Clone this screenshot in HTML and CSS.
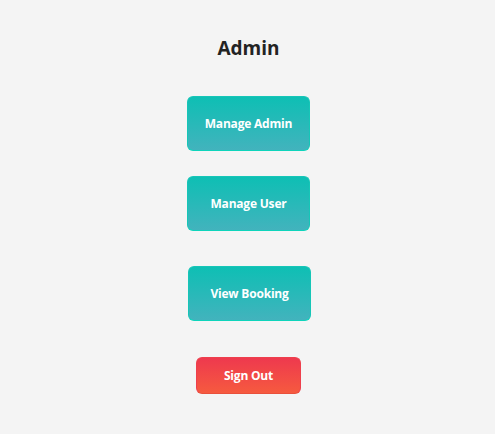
FILE: index.html
```html
<!DOCTYPE html>
<html>
<head>
<meta charset="utf-8">
<link rel="stylesheet" href="styles.css">
</head>
<body>
<main class="panel">
  <h1 class="title">Admin</h1>
  <button class="btn btn-teal btn-first">Manage Admin</button>
  <button class="btn btn-teal btn-second">Manage User</button>
  <button class="btn btn-teal btn-third">View Booking</button>
  <button class="btn btn-red">Sign Out</button>
</main>
</body>
</html>
```
FILE: styles.css
```css
html, body {
  margin: 0;
  padding: 0;
  background: #f4f4f4;
}
body {
  font-family: "Open Sans", "Noto Sans", sans-serif;
  width: 495px;
  height: 434px;
  overflow: hidden;
}
.panel {
  display: flex;
  flex-direction: column;
  align-items: center;
  padding-left: 2px;
}
.title {
  margin: 36px 0 0 0;
  font-size: 19px;
  line-height: 24px;
  font-weight: 700;
  color: #232323;
}
.btn {
  font-family: inherit;
  font-weight: 700;
  font-size: 12px;
  letter-spacing: -0.2px;
  color: #ffffff;
  border-radius: 6px;
  cursor: pointer;
  padding: 0;
}
.btn-teal {
  width: 123px;
  height: 55px;
  background: linear-gradient(to bottom, #0ebfb4, #42b3bd);
  border: 1px solid #16c6b7;
  border-bottom-color: #0ed4bb;
}
.btn-first { margin-top: 36px; }
.btn-second { margin-top: 25px; }
.btn-third { margin-top: 35px; margin-left: 2px; }
.btn-red {
  margin-top: 36px;
  width: 105px;
  height: 37px;
  background: linear-gradient(to bottom, #ee394e, #f65a3f);
  border: 1px solid #ee3f4c;
  border-bottom-color: #e9503c;
}
```
